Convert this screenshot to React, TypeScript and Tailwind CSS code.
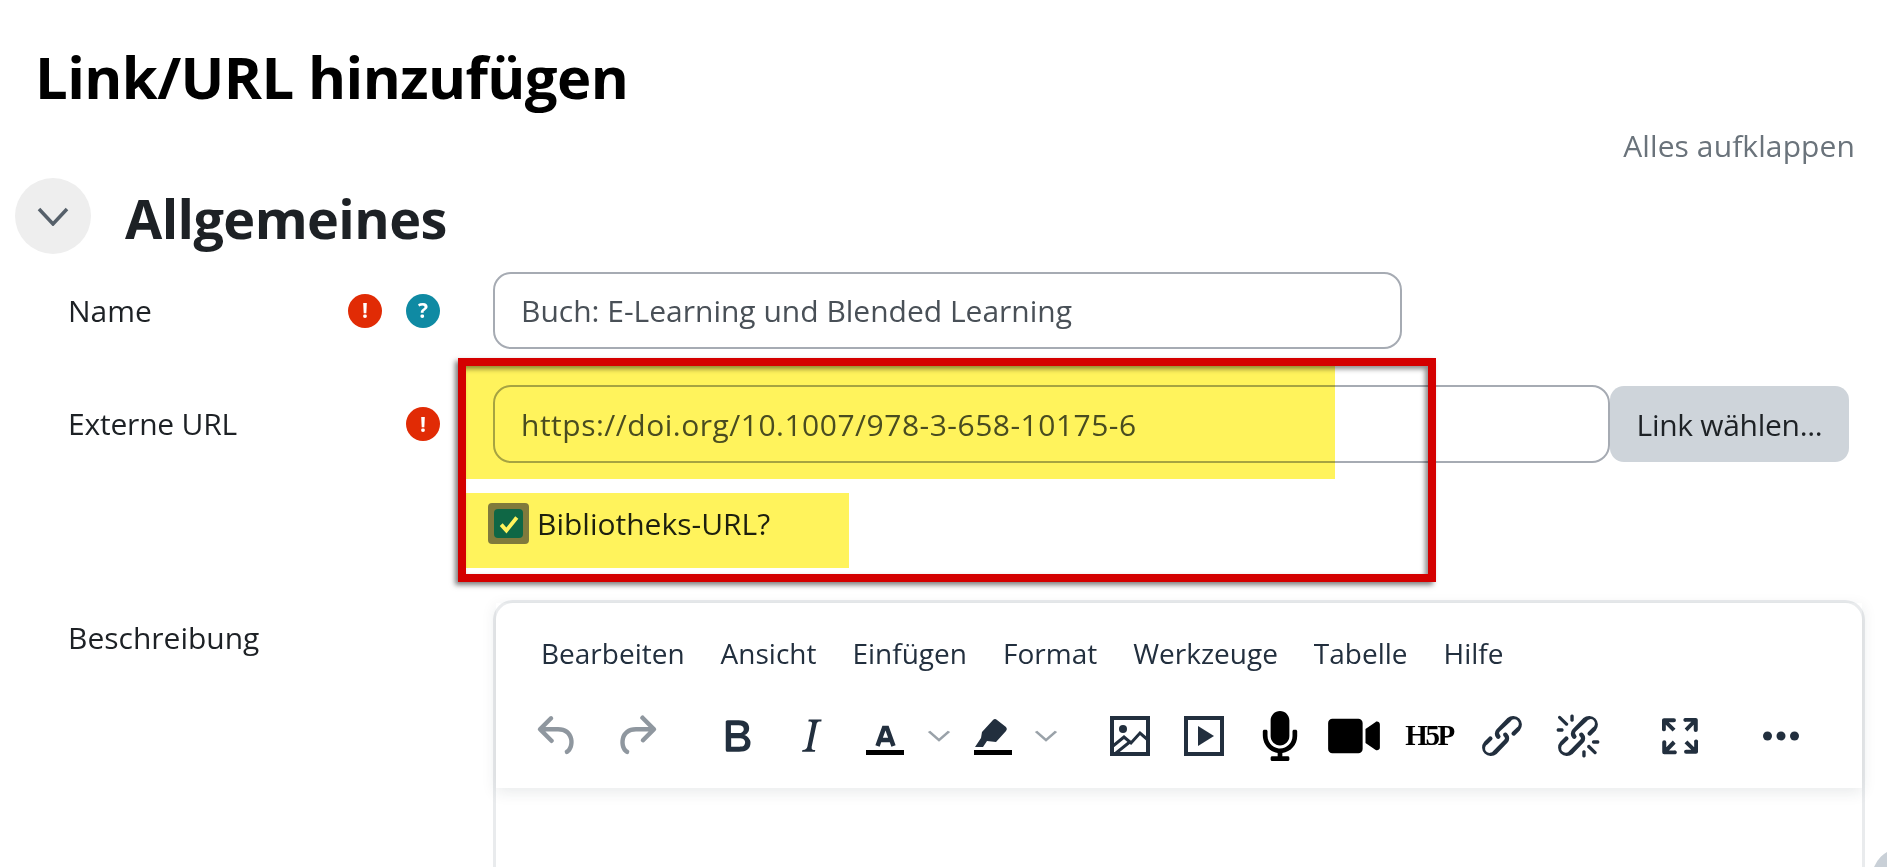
import React from "react";
import { FaMicrophone, FaVideo } from "react-icons/fa";

const ink = "#222f3e";

function Tiny({ d, color = ink, className = "" }: { d: string; color?: string; className?: string }) {
  return (
    <svg viewBox="0 0 24 24" className={`w-[54px] h-[54px] shrink-0 ${className}`} fill={color}>
      <path d={d} fillRule="evenodd" />
    </svg>
  );
}

function Chev({ className = "" }: { className?: string }) {
  return (
    <svg viewBox="0 0 24 24" className={`w-[24px] h-[16px] shrink-0 ${className}`} fill="none" stroke="#9aa2a9" strokeWidth="3" preserveAspectRatio="none">
      <path d="M2 5l10 13L22 5" />
    </svg>
  );
}

function Badge({ kind, className = "" }: { kind: "req" | "help"; className?: string }) {
  return (
    <span
      className={`flex w-[34px] h-[34px] shrink-0 items-center justify-center rounded-full text-white font-bold text-[21px] leading-none ${kind === "req" ? "bg-[#e12b05]" : "bg-[#0f8aa3]"} ${className}`}
    >
      {kind === "req" ? "!" : "?"}
    </span>
  );
}

export default function App() {
  return (
    <div
      className="relative flex flex-col w-[1887px] h-[867px] overflow-hidden bg-white text-[#1d2125]"
      style={{ fontFamily: '"Open Sans","Noto Sans",sans-serif' }}
    >
      <h1 className="mt-[47px] pl-[35px] text-[58px] leading-[60px] font-bold text-black tracking-[-0.6px]">Link/URL hinzufügen</h1>
      <div className="mt-[19px] pr-[32px] text-right text-[30px] leading-[40px] text-[#6a737b] tracking-[0.1px]">Alles aufklappen</div>

      <div className="mt-[12px] flex items-center pl-[15px]">
        <span className="flex w-[76px] h-[76px] items-center justify-center rounded-full bg-[#eeeeee]">
          <svg viewBox="0 0 32 20" className="w-[32px] h-[20px]" fill="none" stroke="#56606a" strokeWidth="3.5">
            <path d="M2 3l14 15L30 3" />
          </svg>
        </span>
        <h2 className="ml-[34px] mt-[4px] text-[54px] leading-[60px] font-bold text-[#1d2125] tracking-[-0.6px]">Allgemeines</h2>
      </div>

      <div className="mt-[18px] flex items-center h-[77px]">
        <div className="flex items-center w-[493px] pl-[68px]">
          <span className="text-[30px] leading-[40px]">Name</span>
          <Badge kind="req" className="ml-auto" />
          <Badge kind="help" className="ml-[24px] mr-[53px]" />
        </div>
        <div className="flex items-center w-[909px] h-[77px] pl-[26px] border-2 border-[#a6abb3] rounded-[18px] text-[30px] text-[#495057]">
          Buch: E-Learning und Blended Learning
        </div>
      </div>

      <div className="mt-[36px] flex items-center h-[78px]">
        <div className="flex items-center w-[493px] pl-[68px]">
          <span className="text-[30px] leading-[40px] tracking-[-0.2px]">Externe URL</span>
          <Badge kind="req" className="ml-auto mr-[53px]" />
        </div>
        <div className="flex items-center w-[1117px] h-[78px] pl-[26px] border-2 border-[#a6abb3] rounded-[18px] text-[30px] text-[#495057] tracking-[0.5px]">
          https://doi.org/10.1007/978-3-658-10175-6
        </div>
        <div className="flex items-center justify-center w-[239px] h-[76px] bg-[#ced4da] rounded-[14px] text-[30px] tracking-[-0.3px]">Link wählen...</div>
      </div>

      <div className="mt-[40px] ml-[488px] flex items-center h-[41px]">
        <span className="flex w-[41px] h-[41px] items-center justify-center rounded-[4px] bg-[#8080a6]">
          <span className="flex w-[29px] h-[29px] items-center justify-center rounded-[4px] bg-[#0f6cbf]">
            <svg viewBox="0 0 20 20" className="w-[26px] h-[26px]" fill="none" stroke="#ffffff" strokeWidth="3">
              <path d="M4 10.5l4 4.5 8-10" />
            </svg>
          </span>
        </span>
        <span className="ml-[8px] text-[30px] leading-[40px]">Bibliotheks-URL?</span>
      </div>

      <div className="mt-[56px] flex flex-1 min-h-0">
        <div className="flex w-[493px] pl-[68px] -mt-[2px]">
          <span className="text-[30px] leading-[40px] mt-[20px]">Beschreibung</span>
        </div>
        <div className="w-[1372px] border-[3px] border-b-0 border-[#e9ebed] rounded-t-[20px]">
          <div className="h-[185px] shadow-[0_4px_14px_rgba(34,47,62,0.1)]">
            <div className="flex gap-[36px] pl-[45px] pt-[30px] text-[28px] leading-[40px] text-[#222f3e]">
              <span>Bearbeiten</span>
              <span>Ansicht</span>
              <span>Einfügen</span>
              <span>Format</span>
              <span>Werkzeuge</span>
              <span>Tabelle</span>
              <span>Hilfe</span>
            </div>
            <div className="mt-[36px] flex items-center h-[54px] pl-[35px]">
              <Tiny color="#8f979f" d="M6.4 8H12c3.7 0 6.2 2 6.8 5.1.6 2.7-.4 5.6-2.3 6.8a1 1 0 0 1-1-1.8c1.1-.6 1.8-2.7 1.4-4.6-.5-2.1-2.1-3.5-4.9-3.5H6.4l3.3 3.3a1 1 0 1 1-1.4 1.4l-5-5a1 1 0 0 1 0-1.4l5-5a1 1 0 0 1 1.4 1.4L6.4 8Z" />
              <Tiny color="#8f979f" className="ml-[24px]" d="M17.6 10H12c-2.8 0-4.4 1.4-4.9 3.5-.4 2 .3 4 1.4 4.6a1 1 0 1 1-1 1.8c-2-1.2-2.9-4.1-2.3-6.8.6-3 3-5.1 6.8-5.1h5.6l-3.3-3.3a1 1 0 1 1 1.4-1.4l5 5a1 1 0 0 1 0 1.4l-5 5a1 1 0 0 1-1.4-1.4l3.3-3.3Z" />
              <Tiny className="ml-[47px]" d="M7.8 19c-.3 0-.5 0-.6-.2l-.2-.5V5.7c0-.2 0-.4.2-.5l.6-.2h5c1.5 0 2.7.3 3.5 1 .7.6 1.1 1.4 1.1 2.5a3 3 0 0 1-.6 1.9c-.4.6-1 1-1.6 1.2.4.1.9.3 1.3.6s.8.7 1 1.2c.4.4.5 1 .5 1.6 0 1.3-.4 2.3-1.3 3-.8.7-2.1 1-3.8 1H7.8Zm5-8.3c.6 0 1.2-.1 1.6-.5.4-.3.6-.7.6-1.3 0-1.1-.8-1.7-2.3-1.7H9.3v3.5h3.4Zm.5 6c.7 0 1.3-.1 1.7-.4.4-.4.6-.9.6-1.5s-.2-1-.7-1.4c-.4-.3-1-.4-2-.4H9.4v3.8h4Z" />
              <Tiny className="ml-[20px]" d="M16.7 4.7l-.1.9h-.3c-.6 0-1 0-1.4.3-.3.3-.4.6-.5 1.1l-2.1 9.8v.6c0 .5.4.8 1.4.8h.2l-.2.8H8l.2-.8h.2c1.1 0 1.8-.5 2-1.5l2-9.8.1-.5c0-.6-.4-.8-1.4-.8h-.3l.2-.9h5.8Z" />
              <svg viewBox="0 0 54 54" className="ml-[20px] w-[54px] h-[54px] shrink-0">
                <path d="M19.5 37L26 19h3l6.500 18M22 31h11" fill="none" stroke={ink} strokeWidth="4.500" />
                <rect x="8" y="41" width="38" height="5" fill="#000" />
              </svg>
              <Chev className="ml-[15px]" />
              <svg viewBox="0 0 54 54" className="ml-[15px] w-[54px] h-[54px] shrink-0">
                <path d="M31 11l9 7a3 3 0 0 1 0 4L30 33l-9-1-4 6H9l6-9 1-6L27 11a3 3 0 0 1 4 0Z" fill={ink} />
                <rect x="8" y="41" width="38" height="5" fill="#000" />
              </svg>
              <Chev className="ml-[14px]" />
              <svg viewBox="0 0 54 54" className="ml-[45px] w-[54px] h-[54px] shrink-0" fill="none" stroke={ink} strokeWidth="4">
                <rect x="9" y="9" width="36" height="36" />
                <circle cx="20" cy="20" r="4" fill={ink} stroke="none" />
                <path d="M10 37l11-9 7 6 9-10 8 7M13 44l15-12" strokeWidth="3" />
              </svg>
              <svg viewBox="0 0 54 54" className="ml-[20px] w-[54px] h-[54px] shrink-0">
                <rect x="9" y="9" width="36" height="36" fill="none" stroke={ink} strokeWidth="4" />
                <path d="M21 17l16 10-16 10Z" fill={ink} />
              </svg>
              <span className="ml-[22px] flex w-[54px] h-[54px] shrink-0 items-center justify-center">
                <FaMicrophone className="text-black w-[50px] h-[50px]" />
              </span>
              <span className="ml-[20px] flex w-[54px] h-[54px] shrink-0 items-center justify-center">
                <FaVideo className="text-black w-[52px] h-[46px]" />
              </span>
              <span
                className="ml-[21px] flex w-[54px] h-[54px] shrink-0 items-center justify-center text-black text-[29px] font-bold tracking-[-2.5px]"
                style={{ fontFamily: '"Liberation Serif",serif' }}
              >
                H5P
              </span>
              <Tiny className="ml-[19px]" d="M6.2 12.3a1 1 0 0 1 1.4 1.4l-2 2a2 2 0 1 0 2.6 2.8l4.8-4.8a1 1 0 0 0 0-1.4 1 1 0 1 1 1.4-1.3 2.9 2.9 0 0 1 0 4L9.6 20a3.9 3.9 0 0 1-5.5-5.5l2-2Zm11.6-.6a1 1 0 0 1-1.4-1.4l2.1-2a2 2 0 1 0-2.7-2.8L11 10a1 1 0 0 0 0 1.4A1 1 0 1 1 9.6 13a2.9 2.9 0 0 1 0-4L14.4 4a3.9 3.9 0 0 1 5.5 5.5l-2 2Z" />
              <Tiny className="ml-[22px]" d="M6.2 12.3a1 1 0 0 1 1.4 1.4l-2.1 2a2 2 0 1 0 2.7 2.8l4.8-4.8a1 1 0 0 0 0-1.4 1 1 0 1 1 1.4-1.3 2.9 2.9 0 0 1 0 4L9.6 20a3.9 3.9 0 0 1-5.5-5.5l2-2Zm11.6-.6a1 1 0 0 1-1.4-1.4l2-2a2 2 0 1 0-2.6-2.8L11 10a1 1 0 0 0 0 1.4A1 1 0 1 1 9.6 13a2.9 2.9 0 0 1 0-4L14.4 4a3.9 3.9 0 0 1 5.5 5.5l-2 2ZM7.6 6.3a.8.8 0 0 1-1 1.1L3.3 4.2a.7.7 0 1 1 1-1l3.2 3.1ZM5.1 8.6a.8.8 0 0 1 0 1.5H3a.8.8 0 0 1 0-1.5H5Zm5-3.5a.8.8 0 0 1-1.5 0V3a.8.8 0 0 1 1.5 0v2Zm6 11.8a.8.8 0 0 1 1-1l3.2 3.2a.8.8 0 0 1-1 1L16 17Zm-2.2 2a.8.8 0 0 1 1.5 0V21a.8.8 0 0 1-1.5 0V19Zm5-3.5a.7.7 0 1 1 0-1.5H21a.8.8 0 0 1 0 1.5H19Z" />
              <Tiny className="ml-[48px]" d="m15.3 10-1.2-1.3 2.9-3h-2.3a.9.9 0 1 1 0-1.7H19c.5 0 .9.4.9.9v4.4a.9.9 0 1 1-1.8 0V7l-2.9 3Zm0 4 3 3v-2.3a.9.9 0 1 1 1.7 0V19c0 .5-.4.9-.9.9h-4.4a.9.9 0 1 1 0-1.8H17l-3-2.9 1.3-1.2ZM10 15.4l-2.9 3h2.3a.9.9 0 1 1 0 1.7H5a.9.9 0 0 1-.9-.9v-4.4a.9.9 0 1 1 1.8 0V17l2.9-3 1.2 1.3ZM8.7 10 5.7 7v2.3a.9.9 0 0 1-1.7 0V5c0-.5.4-.9.9-.9h4.4a.9.9 0 0 1 0 1.8H7l3 2.9-1.3 1.2Z" />
              <svg viewBox="0 0 24 24" className="ml-[47px] w-[54px] h-[54px] shrink-0" fill={ink}>
                <circle cx="6" cy="12" r="2" />
                <circle cx="12" cy="12" r="2" />
                <circle cx="18" cy="12" r="2" />
              </svg>
            </div>
          </div>
        </div>
      </div>

      {/* annotation overlays */}
      <div className="absolute left-[466px] top-[366px] w-[869px] h-[113px] bg-[#fff35c] mix-blend-multiply" />
      <div className="absolute left-[466px] top-[493px] w-[383px] h-[75px] bg-[#fff35c] mix-blend-multiply" />
      <div className="absolute left-[458px] top-[358px] w-[978px] h-[224px] border-[8px] border-[#d40000] shadow-[-3px_3px_5px_rgba(0,0,0,0.5),inset_-3px_3px_5px_rgba(0,0,0,0.45)]" />
      <div className="absolute left-[1872px] top-[848px] w-[60px] h-[60px] rounded-full bg-[#c9d0d7]" />
    </div>
  );
}
